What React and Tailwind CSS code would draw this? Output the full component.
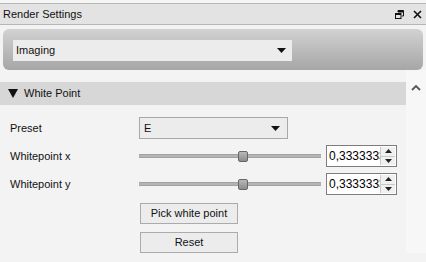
import React from "react";

function ComboArrow() {
  return (
    <svg width="9" height="5" viewBox="0 0 9 5" className="shrink-0">
      <path d="M0 0h9L4.5 5z" fill="#111" />
    </svg>
  );
}

function Slider() {
  return (
    <div className="relative w-[182px] h-[11px] flex items-center">
      <div className="w-full h-[4px] bg-[#b4b4b4] border-y border-[#a2a2a2]" />
      <div className="absolute left-[99px] top-0 w-[10px] h-[11px] rounded-[2px] border border-[#666] bg-gradient-to-b from-[#b8b8b8] to-[#8c8c8c]" />
    </div>
  );
}

function SpinBox() {
  return (
    <div className="w-[71px] h-[22px] border border-[#7d7d7d] bg-white flex items-stretch">
      <div className="flex-1 overflow-hidden whitespace-nowrap pl-[2px] leading-[20px] text-[12px] text-black">0,3333333</div>
      <div className="w-[15px] flex flex-col border-l border-[#c8c8c8] my-[1px] mr-[1px]">
        <div className="flex-1 flex items-center justify-center bg-[#f0f0f0] border-b border-[#c8c8c8]">
          <svg width="7" height="4" viewBox="0 0 7 4"><path d="M3.5 0L7 4H0z" fill="#222" /></svg>
        </div>
        <div className="flex-1 flex items-center justify-center bg-[#f0f0f0]">
          <svg width="7" height="4" viewBox="0 0 7 4"><path d="M0 0h7L3.5 4z" fill="#222" /></svg>
        </div>
      </div>
    </div>
  );
}

export default function App() {
  return (
    <div
      className="w-[426px] h-[262px] overflow-hidden bg-[#f3f3f3] text-[11px] text-[#111]"
      style={{ fontFamily: '"Liberation Sans", Arial, sans-serif' }}
    >
      <div className="h-[3px] bg-[#f5f5f5]" />

      {/* dock title */}
      <div className="h-[22px] border-y border-[#b6b6b6] bg-[#e3e3e3] flex items-center justify-between pl-[3px] pr-[4px]">
        <span className="text-[11px]">Render Settings</span>
        <div className="flex items-center gap-[9px]">
          <svg width="9" height="9" viewBox="0 0 9 9">
            <path d="M3 .5h5.5V6H7M3 .5V2" stroke="#111" strokeWidth="1" fill="none" />
            <path d="M3 1.5h5.5" stroke="#111" strokeWidth="2" />
            <rect x="0.5" y="3.5" width="5.5" height="5" stroke="#111" fill="none" />
            <path d="M0.5 4h5.5" stroke="#111" strokeWidth="2" />
          </svg>
          <svg width="9" height="9" viewBox="0 0 9 9">
            <path d="M1 1l7 7M8 1L1 8" stroke="#111" strokeWidth="1.6" />
          </svg>
        </div>
      </div>

      {/* toolbox page selector */}
      <div className="mt-[4px] mx-[3px] h-[41px] rounded-[6px] bg-gradient-to-b from-[#d2d2d2] to-[#a6a6a6] pl-[10px] pt-[11px]">
        <div className="w-[279px] h-[21px] bg-[#ececec] flex items-center justify-between pl-[3px] pr-[6px]">
          <span>Imaging</span>
          <ComboArrow />
        </div>
      </div>

      <div className="flex">
        <div className="w-[406px] pt-[12px]">
          <div className="h-[23px] bg-[#d7d7d7] flex items-center pl-[8px] gap-[6px]">
            <svg width="10" height="9" viewBox="0 0 10 9"><path d="M0 0h10L5 9z" fill="#111" /></svg>
            <span>White Point</span>
          </div>

          <div className="flex flex-col">
            <div className="flex items-center mt-[12px] h-[22px]">
              <span className="w-[139px] pl-[10px]">Preset</span>
              <div className="w-[149px] h-[22px] border border-[#a8a8a8] bg-[#ececec] flex items-center justify-between pl-[4px] pr-[7px]">
                <span>E</span>
                <ComboArrow />
              </div>
            </div>

            <div className="flex items-center mt-[6px] h-[22px]">
              <span className="w-[139px] pl-[10px]">Whitepoint x</span>
              <Slider />
              <div className="ml-[5px]"><SpinBox /></div>
            </div>

            <div className="flex items-center mt-[6px] h-[22px]">
              <span className="w-[139px] pl-[10px]">Whitepoint y</span>
              <Slider />
              <div className="ml-[5px]"><SpinBox /></div>
            </div>

            <div className="ml-[140px] mt-[8px] flex flex-col gap-[8px]">
              <button className="w-[98px] h-[21px] border border-[#ababab] bg-[#ececec] text-[11px] leading-none">Pick white point</button>
              <button className="w-[98px] h-[21px] border border-[#ababab] bg-[#ececec] text-[11px] leading-none">Reset</button>
            </div>
          </div>
        </div>

        <div className="w-[20px] bg-[#f7f7f7] flex justify-center pt-[15px]">
          <svg width="10" height="6" viewBox="0 0 10 6">
            <path d="M1 5l4-4 4 4" stroke="#555" strokeWidth="1.8" fill="none" />
          </svg>
        </div>
      </div>
    </div>
  );
}
